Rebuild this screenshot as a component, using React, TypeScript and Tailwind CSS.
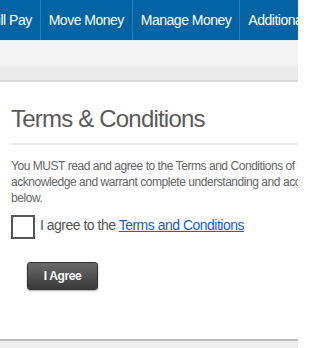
import React from "react";

const navItems = ["Bill Pay", "Move Money", "Manage Money", "Additional Services"];

export default function App() {
  return (
    <div
      className="w-[298px] h-[348px] overflow-hidden bg-[#ededed]"
      style={{ fontFamily: '"Liberation Sans", Arial, sans-serif' }}
    >
      {/* Top nav */}
      <nav className="h-[40px] bg-[#0464a3] flex items-stretch whitespace-nowrap overflow-hidden">
        <div className="flex ml-[-19px]">
          {navItems.map((item) => (
            <a
              key={item}
              className="flex items-center px-[8px] border-r border-[#1f80c6] text-white text-[14px] tracking-[-0.5px]"
            >
              {item}
            </a>
          ))}
        </div>
      </nav>

      {/* Sub header band */}
      <div className="h-[26px] bg-[#f3f3f3] border-t border-[#e6eef4]" />
      <div className="h-[16px] bg-[#ebebeb] border-b-2 border-[#dadada]" />

      {/* Card */}
      <div className="bg-white border-b-2 border-[#bdbdbd] pt-[23px] pb-[49px] pl-[11px] overflow-hidden">
        <h1 className="text-[24px] leading-[28px] tracking-[-0.8px] text-[#5a5a5a] whitespace-nowrap">
          Terms &amp; Conditions
        </h1>
        <div className="mt-[10px] border-t-2 border-[#ebebeb]" />

        <p className="mt-[13px] text-[12px] leading-[16px] tracking-[-0.45px] text-[#666] whitespace-nowrap">
          You MUST read and agree to the Terms and Conditions of this service before continuing. By checking the box, you
          <br />
          acknowledge and warrant complete understanding and acceptance of the Terms and Conditions set forth
          <br />
          below.
        </p>

        <label className="mt-[9px] flex items-center gap-[5px] whitespace-nowrap">
          <span className="w-[24px] h-[24px] border-2 border-[#555] bg-white shrink-0" />
          <span className="text-[14px] tracking-[-0.5px] text-[#555] -mt-[4px]">
            I agree to the{" "}
            <a className="text-[#1a5ccf] underline">Terms and Conditions</a>
          </span>
        </label>

        <button className="mt-[23px] ml-[16px] w-[71px] h-[28px] rounded-[3px] bg-gradient-to-b from-[#6a6a6a] to-[#3a3a3a] text-white text-[12px] font-bold tracking-[-0.4px] shadow-[0_1px_2px_rgba(0,0,0,0.35)] border border-[#333]">
          I Agree
        </button>
      </div>
    </div>
  );
}
